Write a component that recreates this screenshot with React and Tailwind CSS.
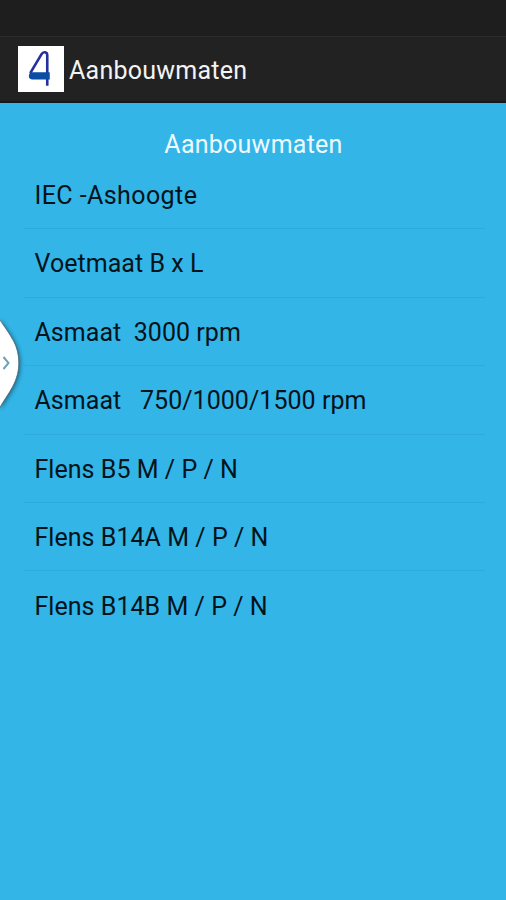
const items = [
    "IEC -Ashoogte",
    "Voetmaat B x L",
    "Asmaat  3000 rpm",
    "Asmaat   750/1000/1500 rpm",
    "Flens B5 M / P / N",
    "Flens B14A M / P / N",
    "Flens B14B M / P / N",
];

export default function App() {
    return (
        <div className="relative flex h-[900px] w-[506px] flex-col overflow-hidden bg-[#33b5e7] font-['Roboto',sans-serif] text-[25px]">

            {/* STATUS BAR */}
            <div className="h-9 shrink-0 bg-[#1e1e1e]" />

            {/* ACTION BAR */}
            <header className="flex h-[67px] shrink-0 items-center border-t border-b-2 border-t-[#2b2b2b] border-b-[#111a1e] bg-[#222222] pl-[18px] text-[#f3f3f3]">
                <svg className="h-[46px] w-[45.5px] bg-white" viewBox="0 0 45 46" fill="none">
                    <path d="M29 39.8V9.2C29 5.7 25 5.2 23.3 8.2L12 27.2" stroke="#2530a0" strokeWidth="2.6" />
                    <path d="M12 26.3H31.5V33.5H14C10.5 33.5 9.5 30 12 26.3Z" fill="#0b4da2" />
                </svg>
                <h1 className="ml-[5.5px] pt-1 tracking-[0.25px]">Aanbouwmaten</h1>
            </header>

            {/* LIST */}
            <main className="pt-[25px] pr-[21px] pl-6">
                <h2 className="pr-[2px] text-center leading-[34px] tracking-[0.25px] text-[#eefaff]">Aanbouwmaten</h2>
                <ul className="-mt-px">
                    {items.map((item) => (
                        <li
                            key={item}
                            className="flex h-[68.4px] items-center border-b border-[#2eabdc] pt-[2px] pl-[10.5px] tracking-[0.04px] whitespace-pre text-[#03131b] first:tracking-[0.42px] last:border-b-0"
                        >
                            {item}
                        </li>
                    ))}
                </ul>
            </main>

            {/* DRAWER HANDLE */}
            <svg
                className="absolute top-[316px] left-0 h-[96px] w-6 drop-shadow-[1px_1px_2px_rgba(0,0,0,0.45)]"
                viewBox="0 0 24 96"
                fill="none"
            >
                <path d="M-2 1C3 9 8 15 13 24C17 31 18.8 39 18.8 47S17 62 13 70C9 78 3 85 -2 95Z" fill="#fff" stroke="#4a6672" strokeWidth="0.8" />
                <path d="M3.5 41L8.5 47L3.5 53" stroke="#6fa3b8" strokeWidth="2" />
            </svg>
        </div>
    );
}
